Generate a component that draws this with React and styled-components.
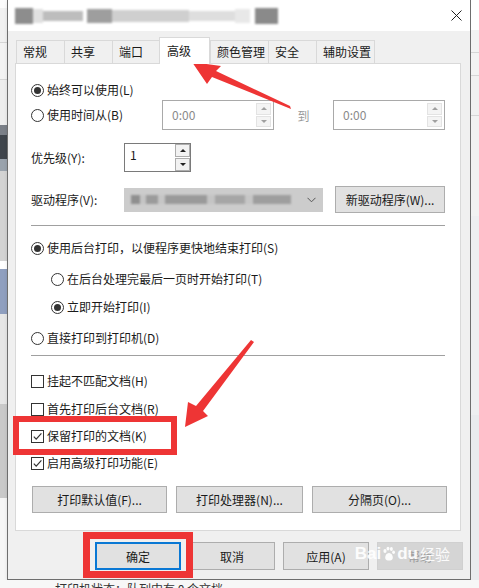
import styled, { createGlobalStyle } from 'styled-components';

const GlobalStyle = createGlobalStyle`
  html, body {
    margin: 0;
    padding: 0;
    overflow: hidden;
    background: #f4f4f4;
  }
  body {
    font-family: "Noto Sans CJK SC", "Noto Sans", sans-serif;
    font-size: 12px;
    color: #1a1a1a;
  }
`;

const RED = '#ee3535';

// whole screenshot area: a desk strip with the dialog, and a status strip below
const Page = styled.div`
  position: relative;
  width: 479px;
  height: 588px;
  display: flex;
  flex-direction: column;
  overflow: hidden;
`;

const Desk = styled.div`
  display: flex;
  height: 580px;
  flex-shrink: 0;
`;

const SideStrip = styled.div`
  width: ${({ $w }) => $w}px;
  flex: ${({ $grow }) => ($grow ? 1 : 'none')};
  display: flex;
  flex-direction: column;
  overflow: hidden;
`;

const StripPart = styled.div`
  height: ${({ $h }) => $h}px;
  background: ${({ $bg }) => $bg};
  border-bottom: ${({ $line }) => ($line ? '1px solid #d6d6d6' : 'none')};
  font-size: 12px;
  line-height: ${({ $h }) => $h}px;
  color: #333;
  white-space: nowrap;
`;

const StatusStrip = styled.div`
  flex: 1;
  background: #f7f7f7;
  padding: 1px 0 0 55px;
  line-height: 16px;
  color: #333;
  white-space: nowrap;
`;

// ---- dialog window ----
const Window = styled.div`
  width: 462px;
  flex-shrink: 0;
  border: 1px solid #6e6e6e;
  border-top: none;
  display: flex;
  flex-direction: column;
  background: #f0f0f0;
  box-shadow: 1px 1px 4px rgba(0, 0, 0, 0.18);
`;

const TitleBar = styled.div`
  height: 31px;
  background: #fff;
  display: flex;
  align-items: center;
  padding-left: 7px;
`;

const TitleBlur = styled.div`
  display: flex;
  align-items: center;
  height: 17px;
  filter: blur(1.3px);
`;

const Blob = styled.span`
  display: block;
  width: ${({ $w }) => $w}px;
  height: ${({ $h }) => $h || 14}px;
  background: ${({ $c }) => $c};
`;

const CloseIcon = styled.svg`
  margin-left: auto;
  margin-right: 8px;
`;

const Body = styled.div`
  flex: 1;
  display: flex;
  flex-direction: column;
  padding: 6px 7px 9px 7px;
`;

const TabBar = styled.div`
  display: flex;
  align-items: flex-end;
  height: 26px;
  padding-left: 1px;
`;

const Tab = styled.div`
  box-sizing: border-box;
  width: ${({ $w }) => $w}px;
  height: ${({ $active }) => ($active ? 27 : 23)}px;
  margin-bottom: ${({ $active }) => ($active ? -1 : 0)}px;
  position: relative;
  z-index: ${({ $active }) => ($active ? 1 : 0)};
  background: ${({ $active }) => ($active ? '#fff' : '#f0f0f0')};
  border: 1px solid #d9d9d9;
  border-bottom: none;
  border-right: ${({ $active }) => ($active ? '1px solid #d9d9d9' : 'none')};
  padding-left: ${({ $active }) => ($active ? 7 : 6)}px;
  line-height: ${({ $active }) => ($active ? 26 : 22)}px;
  white-space: nowrap;
  &:last-child {
    border-right: 1px solid #d9d9d9;
  }
`;

const Panel = styled.div`
  box-sizing: border-box;
  height: 468px;
  margin-right: 2px;
  background: #fff;
  border: 1px solid #d9d9d9;
  padding: 0 15px;
  display: flex;
  flex-direction: column;
`;

const Row = styled.div`
  display: flex;
  align-items: center;
  height: ${({ $h }) => $h || 16}px;
  margin-top: ${({ $mt }) => $mt}px;
  padding-left: ${({ $indent }) => $indent || 0}px;
  white-space: nowrap;
`;

const Cell = styled.div`
  width: ${({ $w }) => $w}px;
  flex-shrink: 0;
  display: flex;
  align-items: center;
  justify-content: ${({ $center }) => ($center ? 'center' : 'flex-start')};
  color: ${({ $muted }) => ($muted ? '#9a9a9a' : 'inherit')};
`;

const Choice = styled.span`
  display: flex;
  align-items: center;
  gap: 3px;
  line-height: 16px;
`;

const RadioDot = styled.span`
  box-sizing: border-box;
  width: 13px;
  height: 13px;
  border: 1px solid #333;
  border-radius: 50%;
  display: flex;
  align-items: center;
  justify-content: center;
  flex-shrink: 0;
  &::after {
    content: '';
    width: 7px;
    height: 7px;
    border-radius: 50%;
    background: #333;
    display: ${({ $on }) => ($on ? 'block' : 'none')};
  }
`;

const CheckBox = styled.span`
  box-sizing: border-box;
  width: 13px;
  height: 13px;
  border: 1px solid #333;
  flex-shrink: 0;
  display: flex;
`;

const Separator = styled.div`
  height: 1px;
  background: #a0a0a0;
  margin-top: ${({ $mt }) => $mt}px;
`;

const Spin = styled.div`
  box-sizing: border-box;
  width: ${({ $w }) => $w}px;
  height: ${({ $h }) => $h}px;
  border: 1px solid ${({ $off }) => ($off ? '#a9a9a9' : '#7a7a7a')};
  background: #fff;
  display: flex;
  padding: ${({ $inset }) => $inset}px;
`;

const SpinValue = styled.span`
  flex: 1;
  padding: ${({ $top }) => ($top ? '3px 0 0 5px' : '0 0 0 7px')};
  align-self: ${({ $top }) => ($top ? 'flex-start' : 'center')};
  color: ${({ $off }) => ($off ? '#8a8a8a' : '#1a1a1a')};
  line-height: 16px;
`;

const SpinButtons = styled.div`
  width: 15px;
  display: flex;
  flex-direction: column;
  gap: 1px;
`;

const SpinBtn = styled.div`
  flex: 1;
  box-sizing: border-box;
  border: 1px solid ${({ $off }) => ($off ? '#e3e3e3' : '#adadad')};
  background: ${({ $off }) => ($off ? '#f4f4f4' : '#f2f2f2')};
  display: flex;
  align-items: center;
  justify-content: center;
  &::after {
    content: '';
    border-left: 3px solid transparent;
    border-right: 3px solid transparent;
    ${({ $down }) => ($down ? 'border-top' : 'border-bottom')}: 3px solid
      ${({ $off }) => ($off ? '#a0a0a0' : '#222')};
  }
`;

const Combo = styled.div`
  box-sizing: border-box;
  width: 201px;
  height: 24px;
  background: #cccccc;
  border: 1px solid #cccccc;
  display: flex;
  align-items: center;
  padding: 0 6px 0 6px;
`;

const ComboBlur = styled.div`
  display: flex;
  align-items: center;
  filter: blur(1px);
`;

const Chevron = styled.svg`
  margin-left: auto;
`;

const Button = styled.div`
  box-sizing: border-box;
  width: ${({ $w }) => $w}px;
  height: ${({ $h }) => $h || 27}px;
  background: ${({ $faded }) => ($faded ? '#d5d5d5' : '#e1e1e1')};
  border: ${({ $primary, $faded }) =>
    $primary ? '2px solid #0a78d4' : $faded ? '1px solid #d0d0d0' : '1px solid #adadad'};
  color: ${({ $faded }) => ($faded ? '#9d9d9d' : '#1a1a1a')};
  display: flex;
  align-items: center;
  justify-content: center;
  white-space: nowrap;
  flex-shrink: 0;
`;

const ButtonRow = styled.div`
  display: flex;
  gap: 9px;
  margin-top: ${({ $mt }) => $mt}px;
  margin-left: 1px;
`;

const DialogButtons = styled.div`
  position: relative;
  display: flex;
  justify-content: flex-end;
  gap: 8px;
  margin-top: 11px;
`;

// baidu watermark laid over the help button
const Watermark = styled.div`
  position: absolute;
  right: 13px;
  top: 1px;
  display: flex;
  align-items: center;
  color: rgba(255, 255, 255, 0.92);
  font-family: "Liberation Sans", Arial, sans-serif;
  font-size: 17px;
  font-weight: bold;
  pointer-events: none;
`;

const WatermarkCn = styled.span`
  font-family: "Noto Sans CJK SC", sans-serif;
  font-size: 15px;
  font-weight: normal;
  margin-left: 2px;
`;

const Overlay = styled.svg`
  position: absolute;
  left: 0;
  top: 0;
  pointer-events: none;
`;

const titleBlobs = [
  [18, '#8d8d8d', 16], [10, '#e0e0e0'], [40, '#bdbdbd', 10], [4, '#fff'], [25, '#9e9e9e'],
  [77, '#cfcfcf', 12], [46, '#dedede', 10], [15, '#e8e8e8'], [5, '#fff'], [23, '#8a8a8a', 16],
];

const comboBlobs = [
  [9, '#8f8f8f'], [6, '#c4c4c4'], [12, '#9b9b9b'], [7, '#c6c6c6'], [42, '#9a9a9a'],
  [8, '#c4c4c4'], [30, '#a6a6a6'], [8, '#c6c6c6'], [38, '#9e9e9e'],
];

const tabs = [
  ['常规', 48], ['共享', 48], ['端口', 47], ['高级', 51, true],
  ['颜色管理', 58], ['安全', 48], ['辅助设置', 59],
];

const leftParts = [
  [8, '#fbfbfb'], [34, '#f1f1f1', true], [36, '#f3f3f3', true], [45, '#eeeeee'],
  [10, '#7b8088'], [25, '#3f454c'], [12, '#9aa3ad'], [90, '#d3d3d3'], [8, '#ffffff'],
  [45, '#8f9fbf'], [90, '#e6e6e6'], [95, '#c9c9c9'], [82, '#f6f6f6'],
];

const rightParts = [
  [30, '#ffffff'], [22, '#f3f3f3', true], [22, '#f3f3f3', true], [40, '#f1f1f1', true],
  [100, '#f2f2f2'], [200, '#eeeff1'], [166, '#e9ebee'],
];

const Radio = ({ on, children }) => (
  <Choice>
    <RadioDot $on={on} />
    {children}
  </Choice>
);

const Check = ({ on, children }) => (
  <Choice>
    <CheckBox>
      {on && (
        <svg width="11" height="11" viewBox="0 0 11 11">
          <polyline points="1.8,5.6 4.2,8.2 9.4,2.4" fill="none" stroke="#333" strokeWidth="1.2" />
        </svg>
      )}
    </CheckBox>
    {children}
  </Choice>
);

const SpinBox = ({ value, w, h, off, inset, top }) => (
  <Spin $w={w} $h={h} $off={off} $inset={inset}>
    <SpinValue $off={off} $top={top}>{value}</SpinValue>
    <SpinButtons>
      <SpinBtn $off={off} />
      <SpinBtn $off={off} $down />
    </SpinButtons>
  </Spin>
);

export default function App() {
  return (
    <Page>
      <GlobalStyle />
      <Desk>
        <SideStrip $w={7}>
          {leftParts.map(([h, bg, line], i) => (
            <StripPart key={i} $h={h} $bg={bg} $line={line} />
          ))}
        </SideStrip>

        <Window>
          <TitleBar>
            <TitleBlur>
              {titleBlobs.map(([w, c, h], i) => (
                <Blob key={i} $w={w} $c={c} $h={h} />
              ))}
            </TitleBlur>
            <CloseIcon width="11" height="11" viewBox="0 0 11 11">
              <path d="M0.5 0.5 L10.5 10.5 M10.5 0.5 L0.5 10.5" stroke="#222" strokeWidth="1" />
            </CloseIcon>
          </TitleBar>

          <Body>
            <TabBar>
              {tabs.map(([label, w, active]) => (
                <Tab key={label} $w={w} $active={active}>{label}</Tab>
              ))}
            </TabBar>

            <Panel>
              <Row $mt={18}>
                <Radio on>始终可以使用(L)</Radio>
              </Row>
              <Row $mt={2} $h={30}>
                <Cell $w={131}>
                  <Radio>使用时间从(B)</Radio>
                </Cell>
                <SpinBox value="0:00" w={113} h={30} off inset={2} />
                <Cell $w={59} $center $muted>到</Cell>
                <SpinBox value="0:00" w={113} h={30} off inset={2} />
              </Row>
              <Row $mt={13} $h={29}>
                <Cell $w={93}>优先级(Y):</Cell>
                <SpinBox value="1" w={67} h={29} inset={0} top />
              </Row>
              <Row $mt={14} $h={27}>
                <Cell $w={93}>驱动程序(V):</Cell>
                <Combo>
                  <ComboBlur>
                    {comboBlobs.map(([w, c], i) => (
                      <Blob key={i} $w={w} $c={c} $h={9} />
                    ))}
                  </ComboBlur>
                  <Chevron width="9" height="6" viewBox="0 0 9 6">
                    <polyline points="0.5,0.8 4.5,4.8 8.5,0.8" fill="none" stroke="#555" strokeWidth="1" />
                  </Chevron>
                </Combo>
                <Cell $w={12} />
                <Button $w={110}>新驱动程序(W)...</Button>
              </Row>

              <Separator $mt={12} />

              <Row $mt={14}>
                <Radio on>使用后台打印，以便程序更快地结束打印(S)</Radio>
              </Row>
              <Row $mt={15} $indent={20}>
                <Radio>在后台处理完最后一页时开始打印(T)</Radio>
              </Row>
              <Row $mt={12} $indent={20}>
                <Radio on>立即开始打印(I)</Radio>
              </Row>
              <Row $mt={15}>
                <Radio>直接打印到打印机(D)</Radio>
              </Row>

              <Separator $mt={9} />

              <Row $mt={17}>
                <Check>挂起不匹配文档(H)</Check>
              </Row>
              <Row $mt={12}>
                <Check>首先打印后台文档(R)</Check>
              </Row>
              <Row $mt={11}>
                <Check on>保留打印的文档(K)</Check>
              </Row>
              <Row $mt={11}>
                <Check on>启用高级打印功能(E)</Check>
              </Row>

              <ButtonRow $mt={15}>
                <Button $w={135}>打印默认值(F)...</Button>
                <Button $w={127}>打印处理器(N)...</Button>
                <Button $w={135}>分隔页(O)...</Button>
              </ButtonRow>
            </Panel>

            <DialogButtons>
              <Button $w={86} $h={28} $primary>确定</Button>
              <Button $w={86} $h={28}>取消</Button>
              <Button $w={86} $h={28}>应用(A)</Button>
              <Button $w={86} $h={28} $faded>帮助</Button>
              <Watermark>
                Bai
                <svg width="16" height="16" viewBox="0 0 16 16">
                  <g fill="rgba(255,255,255,0.92)">
                    <ellipse cx="4" cy="5" rx="1.6" ry="2" />
                    <ellipse cx="7" cy="2.6" rx="1.5" ry="1.9" />
                    <ellipse cx="10.4" cy="3" rx="1.5" ry="1.9" />
                    <ellipse cx="12.6" cy="6.2" rx="1.4" ry="1.8" />
                    <path d="M8 7 C5 7 3.5 11 4.5 13 C5.5 15 10.5 15 11.5 13 C12.5 11 11 7 8 7 Z" />
                  </g>
                </svg>
                du
                <WatermarkCn>经验</WatermarkCn>
              </Watermark>
            </DialogButtons>
          </Body>
        </Window>

        <SideStrip $grow>
          {rightParts.map(([h, bg, line], i) => (
            <StripPart key={i} $h={h} $bg={bg} $line={line} />
          ))}
        </SideStrip>
      </Desk>

      <StatusStrip>打印机状态：队列中有 0 个文档</StatusStrip>

      <Overlay width="479" height="588" viewBox="0 0 479 588">
        <polygon points="192,62 221,66 216,71 290,106 291,109 212,77 207,84" fill={RED} />
        <polygon points="185,427 188,402 196,406 251,340 254,342 203,411 208,416" fill={RED} />
        <rect x="16" y="419" width="158" height="33" fill="none" stroke={RED} strokeWidth="6" />
        <rect x="86.5" y="535.5" width="103" height="39" fill="none" stroke={RED} strokeWidth="7" />
      </Overlay>
    </Page>
  );
}
